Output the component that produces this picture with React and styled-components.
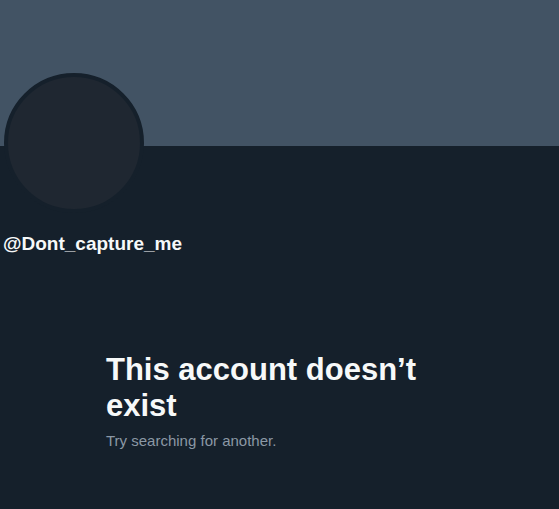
import React from "react";
import styled, { createGlobalStyle } from "styled-components";

const Global = createGlobalStyle`
  html, body {
    margin: 0;
    padding: 0;
    background: #15202b;
  }
  body {
    font-family: "Liberation Sans", Arial, sans-serif;
  }
`;

const Page = styled.div`
  width: 559px;
  min-height: 509px;
  background: #15202b;
  display: flex;
  flex-direction: column;
`;

const Banner = styled.div`
  height: 146px;
  background: #425364;
`;

const AvatarRow = styled.div`
  display: flex;
  padding-left: 4px;
`;

const Avatar = styled.div`
  width: 132px;
  height: 132px;
  margin-top: -73px;
  border: 4px solid #15202b;
  border-radius: 50%;
  background: #1f2731;
`;

const Handle = styled.div`
  margin-top: 19px;
  padding-left: 3px;
  font-size: 19px;
  line-height: 24px;
  font-weight: 700;
  color: #f7f9f9;
`;

const Empty = styled.div`
  width: 347px;
  margin: 96px auto 0;
  display: flex;
  flex-direction: column;
  gap: 7px;
`;

const Title = styled.h1`
  margin: 0;
  font-size: 31px;
  line-height: 36px;
  font-weight: 700;
  color: #f7f9f9;
`;

const Subtitle = styled.p`
  margin: 0;
  font-size: 15px;
  line-height: 20px;
  color: #8b98a5;
`;

export default function App() {
  return (
    <>
      <Global />
      <Page>
        <Banner />
        <AvatarRow>
          <Avatar />
        </AvatarRow>
        <Handle>@Dont_capture_me</Handle>
        <Empty>
          <Title>This account doesn’t exist</Title>
          <Subtitle>Try searching for another.</Subtitle>
        </Empty>
      </Page>
    </>
  );
}
